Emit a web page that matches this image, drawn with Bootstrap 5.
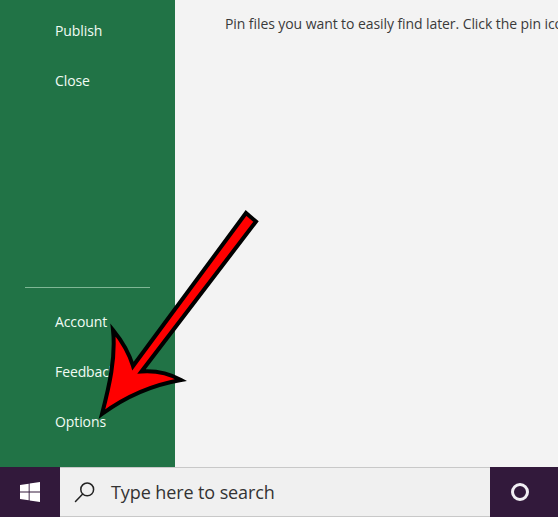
<!DOCTYPE html>
<html lang="en">
<head>
<meta charset="utf-8">
<title>Excel Options</title>
<link href="https://cdn.jsdelivr.net/npm/bootstrap@5.3.0/dist/css/bootstrap.min.css" rel="stylesheet">
<style>
html, body { height: 100%; overflow: hidden; }
body { font-family: "Open Sans", "Noto Sans", sans-serif; background: #f3f3f3; position: relative; }
.shell { height: 517px; }
.workarea { height: 467px; }
.backstage { width: 175px; background: #217346; padding: 6px 0 20px; }
.stage-link { display: block; height: 50px; line-height: 50px; padding: 0 0 0 55px; color: #f1fbf4; font-size: 14px; letter-spacing: -.1px; text-decoration: none; }
.stage-rule { height: 1px; margin: 0 25px 9px; background: #7fb795; }
.pin-note { padding: 14px 0 0 50px; color: #3a3a3a; font-size: 14px; line-height: 20px; white-space: nowrap; overflow: hidden; letter-spacing: -.08px; }
.taskbar { height: 50px; background: #32193b; }
.start-btn { width: 60px; }
.search-box { width: 430px; background: #f0f0f0; border-top: 1px solid #c8c8c8; border-bottom: 1px solid #c8c8c8; color: #333; font-size: 18px; padding-left: 14px; gap: 15px; letter-spacing: -.1px; }
.cortana { width: 68px; }
.cortana-ring { width: 18px; height: 18px; border: 3px solid #f1eef3; border-radius: 50%; margin-left: -8px; }
.callout { position: absolute; left: 0; top: 0; pointer-events: none; }
</style>
</head>
<body>
<div class="shell d-flex flex-column">
  <div class="workarea d-flex">
    <nav class="backstage d-flex flex-column flex-shrink-0">
      <a class="stage-link" href="#">Publish</a>
      <a class="stage-link" href="#">Close</a>
      <div class="mt-auto">
        <div class="stage-rule"></div>
        <a class="stage-link" href="#">Account</a>
        <a class="stage-link" href="#">Feedback</a>
        <a class="stage-link" href="#">Options</a>
      </div>
    </nav>
    <main class="pin-note flex-grow-1">Pin files you want to easily find later. Click the pin icon that appears when you hover over a file.</main>
  </div>
  <footer class="taskbar d-flex flex-shrink-0">
    <div class="start-btn d-flex align-items-center justify-content-center">
      <svg width="20" height="20" viewBox="0 0 20 20" fill="#fff" aria-hidden="true">
        <path d="M0 3 8.7 1.7V9.4H0Z M9.6 1.6 20 0V9.4H9.6Z M0 10.4H8.7V18.2L0 17Z M9.6 10.4H20V20L9.6 18.4Z"/>
      </svg>
    </div>
    <div class="search-box d-flex align-items-center">
      <svg width="22" height="22" viewBox="0 0 22 22" fill="none" stroke="#222" stroke-width="1.5" aria-hidden="true">
        <circle cx="13.2" cy="8.4" r="6.4"/>
        <path d="M8.7 13 1.5 20.5" stroke-linecap="round"/>
      </svg>
      <span>Type here to search</span>
    </div>
    <div class="cortana d-flex align-items-center justify-content-center">
      <div class="cortana-ring"></div>
    </div>
  </footer>
</div>
<svg class="callout" width="558" height="517" viewBox="0 0 558 517" aria-hidden="true">
  <path d="M246 213 256 221.5 141.5 371.5C155 370.5 170 374 181 380 152 385 125 397 102 414 109 387 116 358 113 330 122 341 129 353 133 366Z" fill="#ff0000" stroke="#000" stroke-width="4" stroke-linejoin="miter" stroke-miterlimit="12"/>
</svg>
<script src="https://cdn.jsdelivr.net/npm/bootstrap@5.3.0/dist/js/bootstrap.bundle.min.js"></script>
</body>
</html>
